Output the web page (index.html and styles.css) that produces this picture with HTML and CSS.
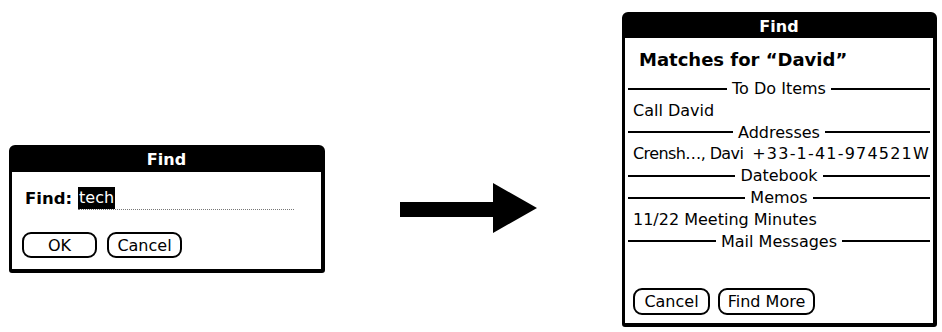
FILE: index.html
```html
<!DOCTYPE html>
<html>
<head>
<meta charset="utf-8">
<link rel="stylesheet" href="styles.css">
</head>
<body>
<div class="stage">
  <div class="dlg dlg-small">
    <div class="title">Find</div>
    <div class="body-small">
      <div class="find-row">
        <span class="label">Find:</span>
        <span class="field"><span class="sel">tech</span></span>
      </div>
      <div class="buttons">
        <span class="btn btn-small">OK</span>
        <span class="btn btn-small">Cancel</span>
      </div>
    </div>
  </div>

  <svg class="arrow" width="137" height="50" viewBox="0 0 137 50">
    <polygon points="0,19 93,19 93,0 137,25 93,50 93,34 0,34" fill="#000"/>
  </svg>

  <div class="dlg dlg-big">
    <div class="title">Find</div>
    <div class="body-big">
      <div class="matches">Matches for “David”</div>
      <div class="section">To Do Items</div>
      <div class="row">Call David</div>
      <div class="section">Addresses</div>
      <div class="row row-split"><span class="name">Crensh…, Davi</span><span class="phone">+33-1-41-974521W</span></div>
      <div class="section">Datebook</div>
      <div class="section">Memos</div>
      <div class="row">11/22 Meeting Minutes</div>
      <div class="section">Mail Messages</div>
      <div class="buttons buttons-big">
        <span class="btn btn-cancel">Cancel</span>
        <span class="btn btn-more">Find More</span>
      </div>
    </div>
  </div>
</div>
</body>
</html>
```

FILE: styles.css
```css
html, body {
  margin: 0;
  padding: 0;
  background: #fff;
}

body {
  font-family: "DejaVu Sans", "Liberation Sans", sans-serif;
  font-size: 16px;
  color: #000;
}

.stage {
  display: flex;
  align-items: flex-start;
  width: 942px;
  height: 332px;
  overflow: hidden;
}

.dlg {
  box-sizing: border-box;
  border: 3px solid #000;
  border-right-width: 4px;
  border-bottom-width: 4px;
  border-radius: 6px 6px 3px 3px;
  background: #fff;
  display: flex;
  flex-direction: column;
}

.title {
  background: #000;
  color: #fff;
  font-weight: bold;
  font-size: 16px;
  text-align: center;
  line-height: 23px;
  height: 23px;
}

.dlg-small {
  width: 316px;
  height: 128px;
  margin: 145px 0 0 9px;
}

.dlg-small .title {
  height: 24px;
  line-height: 24px;
}

.body-small {
  padding: 16px 27px 0 10px;
}

.find-row {
  display: flex;
  align-items: flex-end;
  line-height: 22px;
  height: 22px;
  padding-left: 3px;
}

.label {
  font-weight: bold;
  font-size: 16.5px;
  margin-right: 6px;
}

.field {
  flex: 1;
  border-bottom: 1px dotted #777;
  height: 22px;
}

.sel {
  display: inline-block;
  background: #000;
  color: #fff;
  padding: 0 1px;
  line-height: 22px;
  height: 22px;
}

.buttons {
  display: flex;
  gap: 10px;
  margin-top: 22px;
}

.btn {
  box-sizing: border-box;
  display: flex;
  align-items: center;
  justify-content: center;
  border: 2px solid #000;
  border-radius: 9px;
  height: 26px;
  font-size: 16px;
}

.btn-small {
  width: 75px;
}

.arrow {
  flex: none;
  margin: 183px 0 0 75px;
}

.dlg-big {
  width: 315px;
  height: 315px;
  margin: 12px 0 0 85px;
}

.body-big {
  flex: 1;
  display: flex;
  flex-direction: column;
  padding: 11px 3px 8px 3px;
}

.matches {
  font-weight: bold;
  font-size: 18px;
  line-height: 22px;
  padding-left: 11px;
  margin-bottom: 7px;
}

.section {
  display: flex;
  align-items: center;
  gap: 5px;
  line-height: 21.8px;
  height: 21.8px;
}

.section::before,
.section::after {
  content: "";
  flex: 1;
  height: 2px;
  background: #000;
}

.row {
  line-height: 21.8px;
  height: 21.8px;
  padding-left: 5px;
  white-space: nowrap;
}

.row-split {
  display: flex;
  justify-content: space-between;
  padding-right: 0;
}

.name {
  letter-spacing: -0.6px;
}

.phone {
  letter-spacing: 1.2px;
}

.buttons-big {
  margin-top: auto;
  gap: 8px;
  padding-left: 5px;
}

.btn-cancel {
  width: 77px;
  height: 27px;
}

.btn-more {
  width: 97px;
  height: 27px;
}
```
